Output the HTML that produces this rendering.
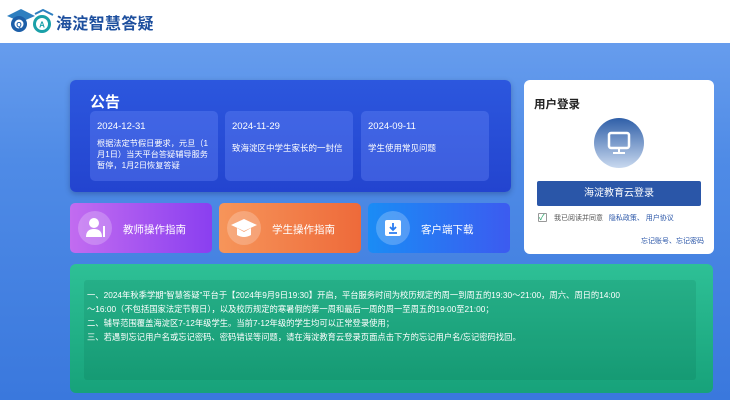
<!DOCTYPE html>
<html><head><meta charset="utf-8"><style>
*{margin:0;padding:0;box-sizing:border-box}
body{width:730px;height:400px;overflow:hidden;font-family:"Liberation Sans","Noto Sans CJK SC",sans-serif;background:linear-gradient(180deg,#6fa3f0 0%,#4f8be6 40%,#3a78dd 100%);position:relative}
.hdr{position:absolute;left:0;top:0;width:730px;height:43px;background:#fff}
.title{position:absolute;left:56px;top:10px;font-size:16px;font-weight:bold;color:#1d4f9e;letter-spacing:0.3px}
.notice{position:absolute;left:70px;top:80px;width:441px;height:112px;border-radius:6px;background:linear-gradient(180deg,#2c57de,#2344cf);box-shadow:0 2px 6px rgba(0,0,40,.25)}
.notice h2{position:absolute;left:20px;top:11px;color:#fff;font-size:15px}
.card{position:absolute;top:31px;width:128px;height:70px;border-radius:5px;background:rgba(120,150,255,.3);color:#fff;font-size:8.5px;padding:10px 5px 10px 7px}
.card .d{font-size:9.5px;margin-bottom:6px}
.card p{line-height:11px}
.btn{position:absolute;top:203px;width:142px;height:50px;border-radius:5px;color:#fff;font-size:10.5px}
.btn .ic{position:absolute;left:8px;top:8px;width:34px;height:34px;border-radius:50%;background:rgba(255,255,255,.22)}
.btn span{position:absolute;left:53px;top:19px}
.login{position:absolute;left:524px;top:80px;width:190px;height:174px;background:#fff;border-radius:6px}
.green{position:absolute;left:70px;top:264px;width:643px;height:129px;border-radius:6px;background:linear-gradient(180deg,#2ec096,#17a27a)}
.inner{position:absolute;left:14px;top:16px;width:612px;height:100px;background:rgba(0,80,60,.12);border-radius:3px;color:#fff;font-size:8.3px;line-height:14px;padding:8px 4px 8px 3px;white-space:nowrap}
</style></head><body>
<div class="hdr">
<svg style="position:absolute;left:5px;top:7px" width="50" height="30" viewBox="0 0 50 30">
<path d="M2 9 L16 2 L30 9 L16 15Z" fill="#2e7fc0"/>
<circle cx="14" cy="17" r="8" fill="#1d5fa8"/><circle cx="14" cy="17" r="4.5" fill="#fff"/><text x="14" y="20" font-size="7" text-anchor="middle" fill="#1d5fa8" font-weight="bold">Q</text>
<circle cx="37" cy="17" r="9" fill="#1aa0a8"/><circle cx="37" cy="17" r="6" fill="#fff"/><text x="37" y="20.5" font-size="8" text-anchor="middle" fill="#1aa0a8" font-weight="bold">A</text>
<path d="M30 7 L38 3 L48 8" stroke="#2e7fc0" stroke-width="2" fill="none"/>
</svg>
<div class="title">海淀智慧答疑</div>
</div>
<div class="notice"><h2>公告</h2>
<div class="card" style="left:20px"><div class="d">2024-12-31</div><p style="font-size:8.2px">根据法定节假日要求，元旦（1月1日）当天平台答疑辅导服务暂停，1月2日恢复答疑</p></div>
<div class="card" style="left:155px"><div class="d">2024-11-29</div><p style="margin-top:11px">致海淀区中学生家长的一封信</p></div>
<div class="card" style="left:291px"><div class="d">2024-09-11</div><p style="margin-top:11px">学生使用常见问题</p></div>
</div>
<div class="btn" style="left:70px;background:linear-gradient(90deg,#c26cf0,#8a3ff0)"><div class="ic"><svg width="34" height="34" viewBox="0 0 34 34"><circle cx="16" cy="12" r="5" fill="#fff"/><path d="M8 26 Q8 18 16 18 Q24 18 24 26Z" fill="#fff"/><rect x="25" y="15" width="2" height="11" fill="#fff"/></svg></div><span>教师操作指南</span></div>
<div class="btn" style="left:219px;background:linear-gradient(90deg,#f6955a,#ee6a3a)"><div class="ic"><svg width="34" height="34" viewBox="0 0 34 34"><path d="M4 14 L17 8 L30 14 L17 20Z" fill="#fff"/><path d="M10 17 V24 Q17 28 24 24 V17 L17 21Z" fill="#fff"/></svg></div><span>学生操作指南</span></div>
<div class="btn" style="left:368px;background:linear-gradient(90deg,#1a8cf5,#3c5bf0)"><div class="ic"><svg width="34" height="34" viewBox="0 0 34 34"><rect x="9" y="9" width="16" height="16" rx="2" fill="#fff"/><path d="M17 12 V19 M14 16 L17 19 L20 16 M13 22 H21" stroke="#2a7cf0" stroke-width="1.8" fill="none"/></svg></div><span>客户端下载</span></div>
<div class="login">
<div style="position:absolute;left:10px;top:16px;font-size:11.5px;font-weight:bold;color:#222">用户登录</div>
<div style="position:absolute;left:70px;top:38px;width:50px;height:50px;border-radius:50%;background:linear-gradient(180deg,#2f5fa8,#c9d9ef)"><svg width="50" height="50" viewBox="0 0 50 50"><rect x="15" y="15" width="20" height="15" rx="2" fill="none" stroke="#fff" stroke-width="2.5"/><path d="M25 30 V35 M19 35 H31" stroke="#fff" stroke-width="2"/></svg></div>
<div style="position:absolute;left:13px;top:101px;width:164px;height:25px;background:#2a56a8;border-radius:2px;color:#fff;font-size:10px;text-align:center;line-height:25px">海淀教育云登录</div>
<div style="position:absolute;left:14px;top:133px;width:9px;height:9px;border:1px solid #999;border-radius:1px;color:#1aa060;font-size:8px;line-height:7px">✓</div>
<div style="position:absolute;left:30px;top:133px;font-size:7px;color:#555">我已阅读并同意 &nbsp; <span style="color:#2a56a8">隐私政策、 用户协议</span></div>
<div style="position:absolute;right:10px;top:156px;font-size:7px;color:#2a56a8">忘记账号、忘记密码</div>
</div>
<div class="green"><div class="inner">
一、2024年秋季学期“智慧答疑”平台于【2024年9月9日19:30】开启，平台服务时间为校历规定的周一到周五的19:30～21:00，周六、周日的14:00<br>～16:00（不包括国家法定节假日），以及校历规定的寒暑假的第一周和最后一周的周一至周五的19:00至21:00；<br>二、辅导范围覆盖海淀区7-12年级学生。当前7-12年级的学生均可以正常登录使用；<br>三、若遇到忘记用户名或忘记密码、密码错误等问题，请在海淀教育云登录页面点击下方的忘记用户名/忘记密码找回。
</div></div>
</body></html>
